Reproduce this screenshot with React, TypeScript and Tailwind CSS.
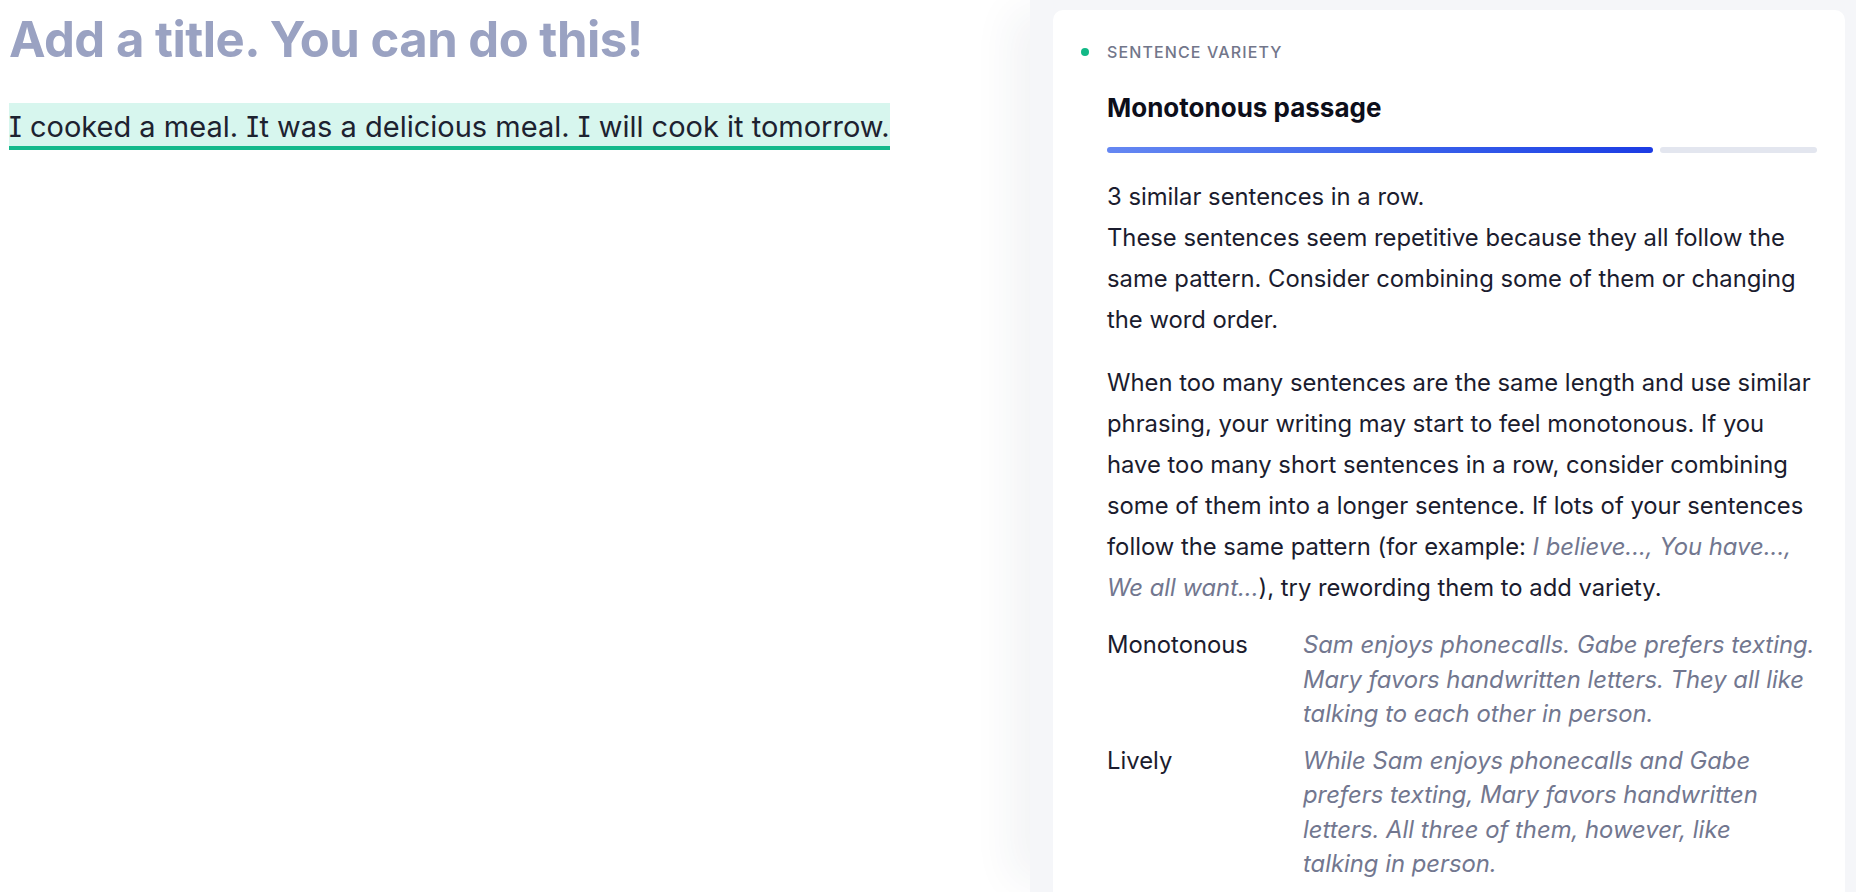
import React from 'react';

const examples = [
    {
        label: 'Monotonous',
        text: 'Sam enjoys phonecalls. Gabe prefers texting. Mary favors handwritten letters. They all like talking to each other in person.',
        width: 'max-w-none'
    },
    {
        label: 'Lively',
        text: 'While Sam enjoys phonecalls and Gabe prefers texting, Mary favors handwritten letters. All three of them, however, like talking in person.',
        width: 'max-w-[480px]'
    }
];

export default function App() {
    return (
        <div className="flex h-[892px] w-full overflow-hidden bg-white font-['Inter',sans-serif]">
            {/* Editor */}
            <main className="flex-1 pl-[9px] pt-[11px]">
                <h1 className="text-[49px] font-bold leading-[58px] tracking-[-0.01em] text-[#9aa2c2]">
                    Add a title. You can do this!
                </h1>
                <div className="mt-[34px]">
                    <span className="inline-block border-b-[4px] border-[#13b98b] bg-[#d7f6ee] pt-[4px] text-[29px] leading-[39px] text-[#1d2230] [font-feature-settings:'cv08']">
                        I cooked a meal. It was a delicious meal. I will cook it tomorrow.
                    </span>
                </div>
            </main>

            {/* Suggestion panel */}
            <aside className="w-[826px] bg-[#f5f6f9] pl-[23px] pr-[11px] pt-[10px] shadow-[-30px_0_40px_-12px_rgba(40,50,90,0.06)]">
                <div className="h-full rounded-t-[10px] bg-white pl-[54px] pr-[24px] pt-[30px] text-[#1b1c2e]">
                    <div className="-ml-[26px] flex h-[24px] items-center gap-[18px]">
                        <span className="h-[8px] w-[8px] rounded-full bg-[#12b886]" />
                        <span className="text-[16px] font-medium uppercase tracking-[0.07em] text-[#72768a]">
                            Sentence variety
                        </span>
                    </div>

                    <h2 className="mt-[28px] text-[26px] font-bold leading-[32px] text-[#0d0e1a]">
                        Monotonous passage
                    </h2>

                    <div className="mr-[4px] mt-[23px] flex h-[6px] gap-[7px]">
                        <div className="w-[546px] rounded-full bg-gradient-to-r from-[#6587f2] to-[#1c3be4]" />
                        <div className="flex-1 rounded-full bg-[#e3e6ef]" />
                    </div>

                    <div className="mt-[23px] text-[23.8px] leading-[41px]">
                        <p>3 similar sentences in a row.</p>
                        <p>
                            These sentences seem repetitive because they all follow the same pattern.
                            Consider combining some of them or changing the word order.
                        </p>
                    </div>

                    <p className="mt-[22px] text-[23.8px] leading-[41px]">
                        When too many sentences are the same length and use similar phrasing, your writing
                        may start to feel monotonous. If you have too many short sentences in a row, consider
                        combining some of them into a longer sentence. If lots of your sentences follow the
                        same pattern (for example:{' '}
                        <em className="text-[#72778f]">I believe..., You have..., We all want...</em>), try
                        rewording them to add variety.
                    </p>

                    <div className="mt-[20px] grid grid-cols-[196px_1fr] gap-y-[12px] text-[23.8px] leading-[34.5px]">
                        {examples.map((ex) => (
                            <React.Fragment key={ex.label}>
                                <div>{ex.label}</div>
                                <div className={`italic text-[#72778f] ${ex.width}`}>{ex.text}</div>
                            </React.Fragment>
                        ))}
                    </div>
                </div>
            </aside>
        </div>
    );
}
